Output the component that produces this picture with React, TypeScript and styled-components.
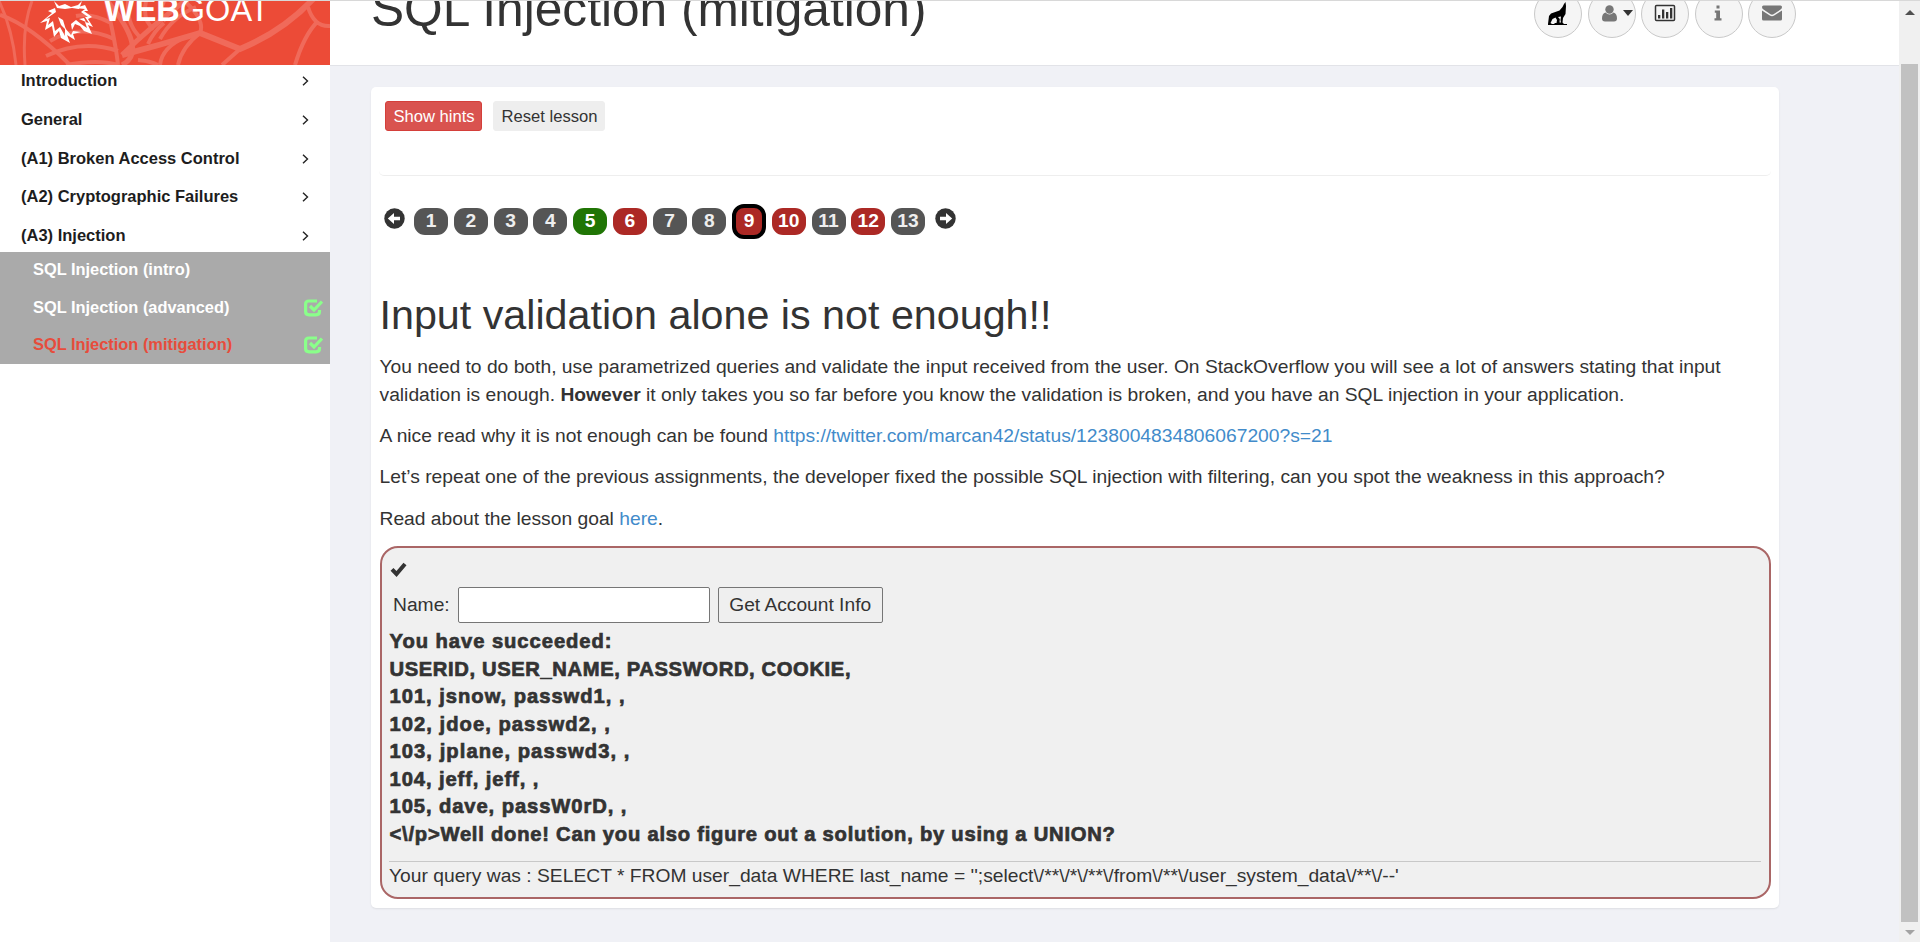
import React from "react";
import styled, { createGlobalStyle, css } from "styled-components";

const Global = createGlobalStyle`
  *, *::before, *::after { box-sizing: border-box; }
  html, body { margin: 0; padding: 0; overflow: hidden; }
  body {
    font-family: "Liberation Sans", Arial, sans-serif;
    font-size: 19.25px;
    line-height: 27.5px;
    color: #333;
    background: #f0f1f6;
  }
`;

const Page = styled.div`
  display: flex;
  height: 942px;
  border-top: 1px solid #d8d8d8;
  overflow: hidden;
`;

const Sidebar = styled.aside`
  width: 330px;
  flex: none;
  background: #fff;
`;

const Brand = styled.div`
  position: relative;
  height: 64px;
  background: #ec4b37;
  overflow: hidden;
`;

const Web = styled.svg`
  display: block;
`;

const BrandName = styled.div`
  position: absolute;
  left: 104px;
  top: -9px;
  font-size: 32.5px;
  line-height: 37px;
  color: #fff;
  white-space: nowrap;
`;

const Menu = styled.nav`
  display: flex;
  flex-direction: column;
`;

const MenuItem = styled.div<{ $h: number; $top?: number; $bottom?: number }>`
  display: flex;
  align-items: center;
  justify-content: space-between;
  height: ${(p) => p.$h}px;
  padding: ${(p) => p.$top ?? 2}px 21px ${(p) => p.$bottom ?? 0}px 21px;
  font-size: 16.5px;
  font-weight: bold;
  color: #1d1d1d;
`;

const SubMenu = styled.div`
  background: #aaa;
  height: 112px;
`;

const SubItem = styled.div<{ $active?: boolean; $h: number }>`
  display: flex;
  align-items: center;
  justify-content: space-between;
  height: ${(p) => p.$h}px;
  padding: 0 7px 0 33px;
  font-size: 16.4px;
  font-weight: bold;
  color: ${(p) => (p.$active ? "#e74c3c" : "#fff")};
`;

const Main = styled.main`
  flex: 1;
  min-width: 0;
`;

const Header = styled.header`
  display: flex;
  justify-content: space-between;
  height: 65px;
  padding: 0 103px 0 41px;
  background: #fff;
  border-bottom: 1px solid #e2e3e8;
`;

const LessonTitle = styled.h1`
  margin: -22px 0 0;
  font-size: 49.65px;
  line-height: 60px;
  font-weight: normal;
  white-space: nowrap;
`;

const Tools = styled.div`
  display: flex;
  gap: 5.5px;
  margin-top: -11px;
`;

const Round = styled.button`
  display: flex;
  align-items: center;
  justify-content: center;
  gap: 6px;
  width: 48px;
  height: 48px;
  padding: 0 1px 2px 0;
  border: 1px solid #c9c9c9;
  border-radius: 50%;
  background: #f5f5f5;
  color: #777;
`;

const Card = styled.section`
  width: 1408px;
  height: 821px;
  margin: 21px 0 0 41px;
  padding: 0 8px;
  background: #fff;
  border-radius: 5px;
  box-shadow: 0 1px 2px rgba(0, 0, 0, 0.08);
`;

const Actions = styled.div`
  display: flex;
  gap: 11px;
  height: 89px;
  padding: 14px 0 0 6px;
  border-bottom: 1px solid #eee;
  border-radius: 5px;
`;

const ActionButton = styled.button<{ $danger?: boolean; $w: number }>`
  width: ${(p) => p.$w}px;
  height: 30px;
  padding: 2px 0 0 1px;
  border: 1px solid #eee;
  border-radius: 3px;
  background: #eee;
  color: #333;
  font: 16.6px "Liberation Sans", Arial, sans-serif;
  white-space: nowrap;
  ${(p) =>
    p.$danger &&
    css`
      border-color: #d43f3a;
      background: #d9534f;
      color: #fff;
    `}
`;

const Pager = styled.div`
  display: flex;
  align-items: center;
  height: 36px;
  margin: 27px 0 0 5px;
`;

const PageList = styled.div`
  display: flex;
  gap: 5.75px;
  margin: 0 10px 0 9px;
`;

const PageLink = styled.span<{ $bg: string; $current?: boolean }>`
  display: flex;
  align-items: center;
  justify-content: center;
  width: 34px;
  height: 27px;
  border-radius: 11px;
  background: ${(p) => p.$bg};
  color: ${(p) => (p.$bg === "#555" ? "#eee" : "#fff")};
  font-size: 19.2px;
  font-weight: bold;
  ${(p) =>
    p.$current &&
    css`
      height: 35px;
      margin: -4px 0;
      border: 4px solid #000;
      border-radius: 12px;
    `}
`;

const Title = styled.h2`
  margin: 53px 0 0 0.5px;
  font-size: 41.25px;
  line-height: 46px;
  font-weight: normal;
`;

const Text = styled.p<{ $top: number }>`
  margin: ${(p) => p.$top}px 0 0 0.5px;
`;

const Link = styled.a`
  color: #428bca;
  text-decoration: none;
`;

const Attack = styled.div`
  height: 353px;
  margin: 13px 0 0 1px;
  padding: 8px 8px 8px 7px;
  border: 2px solid #a66;
  border-radius: 18px;
  background: #f0f0f0;
`;

const Mark = styled.div`
  height: 29px;
  padding: 5px 0 0 1px;
  svg { display: block; }
`;

const Form = styled.form`
  display: flex;
  align-items: center;
  height: 41px;
  padding-left: 4px;
`;

const NameInput = styled.input`
  width: 252px;
  height: 36px;
  margin: 0 8px 0 8px;
  border: 1px solid #767676;
  border-radius: 2px;
  background: #fff;
`;

const Submit = styled.button`
  width: 165px;
  height: 36px;
  padding: 0;
  border: 1px solid #767676;
  border-radius: 2px;
  background: #efefef;
  color: #333;
  font: 19.2px "Liberation Sans", Arial, sans-serif;
`;

const Feedback = styled.div`
  margin: 2.5px 0 0 0.5px;
  font-size: 20.2px;
  font-weight: bold;
  -webkit-text-stroke: 0.7px #333;
`;

const OutputLine = styled.div<{ $track: number }>`
  letter-spacing: ${(p) => p.$track}px;
  white-space: nowrap;
`;

const Query = styled.div`
  margin-top: 12.5px;
  border-top: 1px solid #c8c8c8;
`;

const Scroll = styled.div`
  display: flex;
  flex-direction: column;
  align-items: center;
  width: 21px;
  flex: none;
  padding: 9px 0 7px;
  background: #f0f0f0;
`;

const Thumb = styled.div`
  width: 17px;
  height: 858px;
  margin: 49px 0 8px;
  background: #c1c1c1;
`;

const Arrow = styled.i<{ $down?: boolean }>`
  border: 5px solid transparent;
  border-top: ${(p) => (p.$down ? "5px solid #a3a3a3" : "0")};
  border-bottom: ${(p) => (p.$down ? "0" : "5px solid #505050")};
`;

const Caret = styled.i`
  margin-right: -12px;
  border: 5.5px solid transparent;
  border-top: 6px solid #333;
  border-bottom: 0;
`;

const WebArt = () => (
  <Web width="330" height="64" viewBox="0 0 330 64" fill="none" stroke="#f06a5a" strokeWidth="4">
    <path d="M-4 -6Q12 24 16 64" strokeWidth="3" />
    <path d="M32 0Q22 26 25 64" strokeWidth="3" />
    <path d="M0 14Q30 24 70 64" />
    <path d="M106 0Q116 44 118 64M118 64Q98 58 66 64M118 50Q82 38 46 55M114 38Q80 22 50 40M111 22Q92 12 76 15" />
    <path d="M104 -4Q150 50 122 64M122 54Q150 26 190 -4" strokeWidth="5" />
    <path d="M122 54Q160 44 200 32L240 48Q284 30 315 -4" strokeWidth="6" />
    <path d="M240 48L222 64" strokeWidth="4" />
    <path d="M180 -4Q206 18 200 32M200 32Q182 46 178 64M186 36Q162 46 160 64" />
    <path d="M128 0Q126 24 142 38M146 0Q142 20 154 28M164 0Q158 12 166 20" />
    <path d="M160 38Q172 16 196 6M148 43Q154 30 164 22M138 59Q150 60 158 64" />
    <path d="M308 6Q314 26 330 25M318 20Q304 34 295 64" />
  </Web>
);

const GoatArt = styled.svg`
  position: absolute;
  left: 38px;
  top: -1px;
`;

const Goat = () => (
  <GoatArt width="58" height="46" viewBox="0 0 58 46" fill="#fff">
    <path d="M16 1L21 6L27 4L33 7L40 5L44 1L41 9L34 8L27 9L19 8Z" />
    <path d="M17 8L10 11L14 13L2 23L9 21L7 30L14 26L16 37L21 31L23 38L32 43L29 35L37 40L35 34L43 32L35 31L33 35L27 28L27 36L22 27L17 31L15 21L10 25L12 18L8 19L18 12Z" />
    <path d="M37 8L47 5L50 11L46 11L54 17L50 19L55 27L50 25L54 34L46 31L42 26L37 24L34 30L33 24L38 20L43 24L49 28L47 22L51 23L47 17L50 17L43 12L47 9Z" />
    <path d="M20 17L23 25L28 30L25 20ZM41 19L46 18L48 22Z" />
  </GoatArt>
);

const Wolf = () => (
  <svg width="19" height="23" viewBox="0 0 19 23" fill="#000">
    <path d="M17.5 0L16 2L14.5 5L11.5 8.5L3 11.5L1 14L0 22H4L2.5 21L4.5 17L7.5 15.5L9 18L8.5 21H6.5V22H0V23H19V22H16L14.5 20.5L15 16L17.5 12L18 4Z" />
    <path d="M10 15L13 14.5L12.5 18L13 20.5H11.5L11.8 17Z" fill="#f5f5f5" />
  </svg>
);

const User = () => (
  <svg width="15" height="17" viewBox="0 0 15 17" fill="currentColor">
    <circle cx="7.5" cy="4.5" r="4.2" />
    <path d="M3.5 7.5Q0 8.5 0 13.5Q0 16.5 3 16.5H12Q15 16.5 15 13.5Q15 8.5 11.5 7.5Q9.8 9.5 7.5 9.5Q5.2 9.5 3.5 7.5Z" />
  </svg>
);

const Chart = () => (
  <svg width="22" height="18" viewBox="0 0 22 18" fill="#333">
    <rect x="1.5" y="1.5" width="19" height="15" rx="1" fill="none" stroke="#333" strokeWidth="1.5" />
    <path d="M4 11h2.300v3.500H4zM8 5.500h2.300v9H8zM12 8h2.300v6.500H12zM16 4h2.300v10.500H16z" />
  </svg>
);

const Info = () => (
  <svg width="8" height="16" viewBox="0 0 8 16" fill="currentColor">
    <path d="M2.5 0.5H5.5V3.5H2.5zM0.8 5.5H6V13.3H7.5V15.5H0.5V13.3H2.2V7.7H0.8z" />
  </svg>
);

const Envelope = () => (
  <svg width="20" height="16" viewBox="0 0 20 16" fill="currentColor">
    <path d="M1.500 0.500H18.500Q20 0.500 20 2Q20 3.500 18.500 4.600L11.500 9.300Q10 10.200 8.500 9.300L1.500 4.600Q0 3.500 0 2Q0 0.500 1.500 0.500Z" />
    <path d="M0 5.500L7.800 10.600Q10 11.900 12.200 10.600L20 5.500V14Q20 15.500 18.500 15.500H1.500Q0 15.500 0 14Z" />
  </svg>
);

const Chevron = () => (
  <svg width="7" height="10" viewBox="0 0 7 10" fill="none" stroke="#222" strokeWidth="1.4">
    <path d="M1 0.7L5.5 5L1 9.3" />
  </svg>
);

const CircleArrow = styled.svg<{ $flip?: boolean }>`
  width: 21px;
  height: 21px;
  margin-top: -5px;
  transform: ${(p) => (p.$flip ? "scaleX(-1)" : "none")};
`;

const StepArrow = ({ flip }: { flip?: boolean }) => (
  <CircleArrow $flip={flip} viewBox="0 0 21 21">
    <circle cx="10.5" cy="10.5" r="10.2" fill="#333" />
    <path d="M3.8 10.5L10 5V8.7H16V12.3H10V16Z" fill="#fff" />
  </CircleArrow>
);

const Check = () => (
  <svg width="17" height="17" viewBox="0 0 17 17" fill="none" stroke="#333" strokeWidth="4">
    <path d="M2 8.3L6.5 13L15 3" />
  </svg>
);

const Done = () => (
  <svg width="19" height="18" viewBox="0 0 19 18" fill="none" stroke="#8aff8a" strokeWidth="3.2">
    <path d="M13 2H5Q1.6 2 1.6 5V12.500Q1.600 15.800 5 15.800H12Q15.500 15.800 15.500 12.500V11" />
    <path d="M6 7L10 11L18 2.500" />
  </svg>
);

const menu = [
  { label: "Introduction", h: 34, top: 0, bottom: 3 },
  { label: "General", h: 39 },
  { label: "(A1) Broken Access Control", h: 39 },
  { label: "(A2) Cryptographic Failures", h: 38 },
  { label: "(A3) Injection", h: 37, top: 4 },
];

const grey = "#555";
const green = "#207505";
const red = "#ac2925";
const pages = [grey, grey, grey, grey, green, red, grey, grey, red, red, grey, red, grey];

const output = [
  { text: "You have succeeded:", track: 0.95 },
  { text: "USERID, USER_NAME, PASSWORD, COOKIE,", track: 0.62 },
  { text: "101, jsnow, passwd1, ,", track: 0.97 },
  { text: "102, jdoe, passwd2, ,", track: 1.03 },
  { text: "103, jplane, passwd3, ,", track: 1.06 },
  { text: "104, jeff, jeff, ,", track: 0.9 },
  { text: "105, dave, passW0rD, ,", track: 0.91 },
  { text: "<\\/p>Well done! Can you also figure out a solution, by using a UNION?", track: 0.76 },
];

const query = "Your query was : SELECT * FROM user_data WHERE last_name = '';select\\/**\\/*\\/**\\/from\\/**\\/user_system_data\\/**\\/--'";

export default function App() {
  return (
    <>
      <Global />
      <Page>
        <Sidebar>
          <Brand>
            <WebArt />
            <Goat />
            <BrandName><b>WEB</b>GOAT</BrandName>
          </Brand>
          <Menu>
            {menu.map((m) => (
              <MenuItem key={m.label} $h={m.h} $top={m.top} $bottom={m.bottom}>
                {m.label}
                <Chevron />
              </MenuItem>
            ))}
            <SubMenu>
              <SubItem $h={35}>SQL Injection (intro)</SubItem>
              <SubItem $h={41}>SQL Injection (advanced)<Done /></SubItem>
              <SubItem $h={33} $active>SQL Injection (mitigation)<Done /></SubItem>
            </SubMenu>
          </Menu>
        </Sidebar>
        <Main>
          <Header>
            <LessonTitle>SQL Injection (mitigation)</LessonTitle>
            <Tools>
              <Round><Wolf /></Round>
              <Round><User /><Caret /></Round>
              <Round><Chart /></Round>
              <Round><Info /></Round>
              <Round><Envelope /></Round>
            </Tools>
          </Header>
          <Card>
            <Actions>
              <ActionButton $w={97} $danger>Show hints</ActionButton>
              <ActionButton $w={112}>Reset lesson</ActionButton>
            </Actions>
            <Pager>
              <StepArrow />
              <PageList>
                {pages.map((bg, i) => (
                  <PageLink key={i} $bg={bg} $current={i === 8}>{i + 1}</PageLink>
                ))}
              </PageList>
              <StepArrow flip />
            </Pager>
            <Title>Input validation alone is not enough!!</Title>
            <Text $top={15}>
              You need to do both, use parametrized queries and validate the input received from the user. On StackOverflow you will see a lot of answers stating that input
              validation is enough. <b>However</b> it only takes you so far before you know the validation is broken, and you have an SQL injection in your application.
            </Text>
            <Text $top={14}>
              A nice read why it is not enough can be found <Link>https://twitter.com/marcan42/status/1238004834806067200?s=21</Link>
            </Text>
            <Text $top={13}>
              Let’s repeat one of the previous assignments, the developer fixed the possible SQL injection with filtering, can you spot the weakness in this approach?
            </Text>
            <Text $top={15}>Read about the lesson goal <Link>here</Link>.</Text>
            <Attack>
              <Mark><Check /></Mark>
              <Form>
                Name:
                <NameInput />
                <Submit type="button">Get Account Info</Submit>
              </Form>
              <Feedback>
                {output.map((line) => (
                  <OutputLine key={line.text} $track={line.track}>{line.text}</OutputLine>
                ))}
              </Feedback>
              <Query>{query}</Query>
            </Attack>
          </Card>
        </Main>
        <Scroll>
          <Arrow />
          <Thumb />
          <Arrow $down />
        </Scroll>
      </Page>
    </>
  );
}
